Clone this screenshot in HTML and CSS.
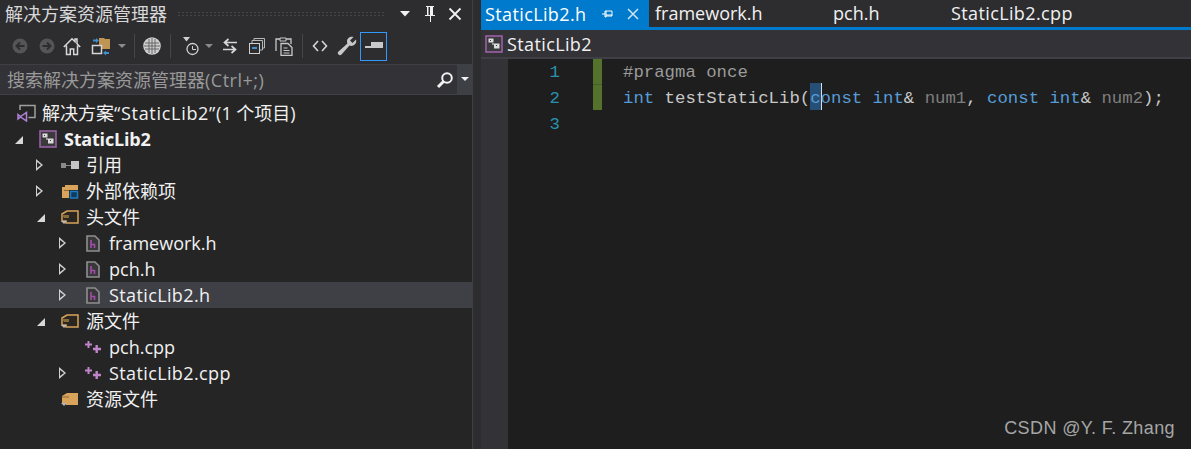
FILE: index.html
```html
<!DOCTYPE html>
<html lang="zh">
<head>
<meta charset="utf-8">
<title>StaticLib2</title>
<link rel="stylesheet" href="styles.css">
</head>
<body>
<div class="app">
  <aside class="explorer">
    <header class="titlebar">
      <span class="title">解决方案资源管理器</span>
      <span class="grip"></span>
      <span class="title-actions">
        <svg class="ti" width="14" height="14" viewBox="0 0 14 14"><path d="M2 4h10L7 9.500z" fill="#f1f1f1"/></svg>
        <svg class="ti" width="14" height="18" viewBox="0 0 14 18"><path d="M3 1h8v1h-1v8h2v1H8v6H7v-6H2v-1h2V2H3zM5.500 2v8H7V2z" fill="#f1f1f1"/></svg>
        <svg class="ti" width="14" height="14" viewBox="0 0 14 14"><path d="M1.500 1.500l11 11M12.500 1.500l-11 11" stroke="#f1f1f1" stroke-width="1.800"/></svg>
      </span>
    </header>
    <div class="toolbar">
      <span class="btn"><svg width="16" height="16" viewBox="0 0 16 16"><circle cx="8" cy="8" r="7.500" fill="#555"/><path d="M12.500 8H5M8 4.500L4.500 8 8 11.500" stroke="#2d2d30" stroke-width="2" fill="none"/></svg></span>
      <span class="btn"><svg width="16" height="16" viewBox="0 0 16 16"><circle cx="8" cy="8" r="7.500" fill="#555"/><path d="M3.500 8H11M8 4.500L11.500 8 8 11.500" stroke="#2d2d30" stroke-width="2" fill="none"/></svg></span>
      <span class="btn"><svg class="home" width="18" height="19" viewBox="0 0 18 19"><path d="M.8 10L9 1.800l3 3V2h2v4.800L17.200 10M3.500 8.500V17.500h3.800v-5.500h3.400v5.500h3.800V8.500" stroke="#d8d8d8" stroke-width="1.500" fill="none"/></svg></span>
      <span class="btn"><svg width="20" height="19" viewBox="0 0 20 19"><path d="M8 1h5l1 1h5v10H8z" fill="#c09553"/><rect x="1.500" y="8.500" width="9" height="8" fill="#2d2d30" stroke="#d6d6d6" stroke-width="1.500"/><path d="M2 3.500h4M13 16h5" stroke="#3f8ed0" stroke-width="2"/><path d="M5 1l3 2.500L5 6zM15 13.500l-3 2.500 3 2.500z" fill="#3f8ed0"/></svg></span>
      <span class="drop"></span>
      <span class="sep s1"></span>
      <span class="btn"><svg width="18" height="18" viewBox="0 0 18 18"><circle cx="9" cy="9" r="8.800" fill="#cfcfcf"/><path d="M6 2v14M9 1v16M12 2v14M2 6h14M1 9h16M2 12h14" stroke="#666" stroke-width="1"/></svg></span>
      <span class="sep s3"></span>
      <span class="btn"><svg width="18" height="20" viewBox="0 0 18 20"><path d="M1 1h7L4.500 5.500z" fill="#d0d0d0"/><circle cx="10.500" cy="13" r="5.500" fill="none" stroke="#d0d0d0" stroke-width="1.300"/><path d="M10.500 10v3.500H14" stroke="#d0d0d0" fill="none"/></svg></span>
      <span class="drop d2"></span>
      <span class="btn b-arrows"><svg width="16" height="16" viewBox="0 0 16 16"><path d="M15 4.500H3M6.500 1L2.500 4.500l4 3.500M1 11.500h12M9.500 8l4 3.500-4 3.500" stroke="#d6d6d6" stroke-width="1.700" fill="none"/></svg></span>
      <span class="btn"><svg width="16" height="16" viewBox="0 0 16 16"><path d="M5 3V.5h10.500V10H13" stroke="#b8b8b8" fill="none"/><path d="M3 5.500V2.500h10.500V12H11" stroke="#b8b8b8" fill="none"/><rect x=".5" y="5.500" width="10" height="10" fill="#2d2d30" stroke="#d0d0d0"/><path d="M3 10h5" stroke="#4a90c8" stroke-width="2"/></svg></span>
      <span class="btn"><svg width="18" height="19" viewBox="0 0 18 19"><path d="M1 14V2h4M11 2h5v5" stroke="#c8c8c8" stroke-width="1.300" fill="none"/><path d="M5 1h6v3H5z" fill="#2d2d30" stroke="#c8c8c8"/><path d="M6 6.500h7l4 4v8H6z" fill="#2d2d30" stroke="#c8c8c8" stroke-width="1.300"/><path d="M8.500 11h4M8.500 13.500h6M8.500 16h6" stroke="#c8c8c8"/></svg></span>
      <span class="sep s2"></span>
      <span class="btn"><svg width="16" height="14" viewBox="0 0 16 14"><path d="M6 2L1.500 7 6 12M10 2l4.500 5L10 12" stroke="#d6d6d6" stroke-width="1.600" fill="none"/></svg></span>
      <span class="btn"><svg width="20" height="20" viewBox="0 0 20 20"><path d="M19 3.500L15.500 7 13 4.500 16.500 1C13.500 0 10 2 10 5.500c0 .8.200 1.500.4 2L1.500 15.500c-1 1-1 2 0 3s2 1 3 0l8-8.900c3.500 1.500 7.800-1.600 6.500-6.100z" fill="#c8c8c8"/></svg></span>
      <span class="tb-active"><svg width="18" height="8" viewBox="0 0 18 8"><path d="M6 0h12v6H0V4h6z" fill="#c8c8c8"/></svg></span>
    </div>
    <div class="search">
      <span class="search-text">搜索解决方案资源管理器<span class="wide5">(Ctrl+;)</span></span>
      <svg class="search-icon" width="18" height="18" viewBox="0 0 18 18"><circle cx="11" cy="7" r="4.800" fill="none" stroke="#f1f1f1" stroke-width="2"/><path d="M7.500 10.500L2 16" stroke="#f1f1f1" stroke-width="3"/></svg>
      <span class="search-drop"></span>
    </div>
    <ul class="tree">
      <li class="row sol">
        <span class="ic"><svg width="19" height="18" viewBox="0 0 19 18"><path d="M3 6V1.500h15v12h-6.500" fill="none" stroke="#a0a0a0" stroke-width="1.500"/><path d="M9.500 8.500v8.500L3.500 13 1 15V10.500L3.500 12.500z" fill="none" stroke="#b180d7" stroke-width="1.500"/></svg></span>
        <span class="tx cjk">解决方案<span class="wider">“StaticLib2”</span>(1 个项目)</span>
      </li>
      <li class="row l0">
        <span class="tw open"></span>
        <span class="ic"><svg width="18" height="18" viewBox="0 0 18 18"><use href="#proj"/></svg></span>
        <span class="tx bold">StaticLib2</span>
      </li>
      <li class="row l1">
        <span class="tw"></span>
        <span class="ic"><svg width="18" height="8" viewBox="0 0 18 8"><rect x="0" y="2" width="5" height="5" fill="#8a8a8a"/><rect x="5" y="4" width="5" height="1" fill="#8a8a8a"/><rect x="10" y="0" width="8" height="8" fill="#c4c4c4"/></svg></span>
        <span class="tx cjk">引用</span>
      </li>
      <li class="row l1">
        <span class="tw"></span>
        <span class="ic"><svg width="18" height="16" viewBox="0 0 18 16"><path d="M1 4h3V2h13v13H1z" fill="#d9a35b"/><path d="M3 7h14v1H3z" fill="#8a6a3a"/><rect x="8" y="7" width="10" height="9" fill="#252526"/><rect x="9.500" y="8.500" width="7" height="6.500" fill="#123a5a" stroke="#1b7cc4" stroke-width="1.500"/></svg></span>
        <span class="tx cjk">外部依赖项</span>
      </li>
      <li class="row l1">
        <span class="tw open"></span>
        <span class="ic"><svg width="18" height="16" viewBox="0 0 18 16"><use href="#folder"/></svg></span>
        <span class="tx cjk">头文件</span>
      </li>
      <li class="row l2">
        <span class="tw"></span>
        <span class="ic"><svg width="14" height="17" viewBox="0 0 14 17"><use href="#hfile"/></svg></span>
        <span class="tx">framework.h</span>
      </li>
      <li class="row l2">
        <span class="tw"></span>
        <span class="ic"><svg width="14" height="17" viewBox="0 0 14 17"><use href="#hfile"/></svg></span>
        <span class="tx">pch.h</span>
      </li>
      <li class="row l2 selected">
        <span class="tw"></span>
        <span class="ic"><svg width="14" height="17" viewBox="0 0 14 17"><use href="#hfile"/></svg></span>
        <span class="tx wide">StaticLib2.h</span>
      </li>
      <li class="row l1">
        <span class="tw open"></span>
        <span class="ic"><svg width="18" height="16" viewBox="0 0 18 16"><use href="#folder"/></svg></span>
        <span class="tx cjk">源文件</span>
      </li>
      <li class="row l2">
        <span class="tw none"></span>
        <span class="ic"><svg width="16" height="12" viewBox="0 0 16 12"><use href="#cpp"/></svg></span>
        <span class="tx">pch.cpp</span>
      </li>
      <li class="row l2">
        <span class="tw"></span>
        <span class="ic"><svg width="16" height="12" viewBox="0 0 16 12"><use href="#cpp"/></svg></span>
        <span class="tx wide">StaticLib2.cpp</span>
      </li>
      <li class="row l1">
        <span class="tw none"></span>
        <span class="ic"><svg width="18" height="16" viewBox="0 0 18 16"><path d="M1 5l5-3h11v12H5v-2H1z" fill="#d9a35b"/><path d="M1 6h7" stroke="#8a6a3a"/><path d="M0 12h6l-3 3z" fill="#b8b8b8"/></svg></span>
        <span class="tx cjk">资源文件</span>
      </li>
    </ul>
  </aside>
  <main class="editor">
    <nav class="tabs">
      <div class="tab active">
        <span class="tab-name wide">StaticLib2.h</span>
        <svg class="tab-pin" width="12" height="10" viewBox="0 0 12 10"><path d="M0 5h3M3 2h1v6H3zM4 2h6v5H4M4 6h6" stroke="#fff" fill="none"/></svg>
        <svg class="tab-close" width="12" height="12" viewBox="0 0 12 12"><path d="M1 1l10 10M11 1L1 11" stroke="#d0e4f3" stroke-width="1.500"/></svg>
      </div>
      <div class="tab t-fw">framework.h</div>
      <div class="tab t-pch">pch.h</div>
      <div class="tab t-cpp wide">StaticLib2.cpp</div>
    </nav>
    <div class="navbar">
      <svg width="18" height="18" viewBox="0 0 18 18"><use href="#proj"/></svg>
      <span class="wide">StaticLib2</span>
    </div>
    <div class="code">
      <div class="margin"></div>
      <div class="numbers"><div>1</div><div>2</div><div>3</div></div>
      <div class="changes"><div class="chg"></div><div class="chg"></div></div>
      <div class="lines">
        <div class="ln pp">#pragma once</div>
        <div class="ln"><span class="kw">int</span> testStaticLib(<span class="sel kw">c</span><span class="kw">onst</span> <span class="kw">int</span>&amp; <span class="prm">num1</span>, <span class="kw">const</span> <span class="kw">int</span>&amp; <span class="prm">num2</span>);</div>
        <div class="ln"></div>
      </div>
    </div>
  </main>
</div>
<div class="watermark">CSDN @Y. F. Zhang</div>
<svg class="defs" width="0" height="0">
  <defs>
    <g id="proj"><rect x="1" y="1" width="16" height="16" fill="#3a3a3d" stroke="#9b5fa8" stroke-width="1.600"/><path d="M3.500 3.500h5v4h-5zM9 8.500h5.500v5H9z" fill="#dcdcdc"/><path d="M5 5h1v1H5zM11 10h1v1h-1z" fill="#3a3a3d"/><path d="M7 8h2v2H7z" fill="#9a9a9a"/></g>
    <g id="folder"><path d="M1 5l5-3h11v12H5v-2H1z" fill="#2a2620" stroke="#d9a35b" stroke-width="1.500"/><path d="M1 6h7v3H3z" fill="#8a6a3a"/><path d="M0 12h6l-3 3z" fill="#b8b8b8"/></g>
    <g id="hfile"><path d="M1 1h8l4 4v11H1z" fill="#38383a" stroke="#8f8f8f" stroke-width="1.600"/><path d="M5 5v8M5 9.500h3.500v3.500" stroke="#a24ea8" stroke-width="1.600" fill="none"/></g>
    <g id="cpp" fill="#c084c8"><path d="M2.500 0h2v2.500H7v2H4.500V7h-2V4.500H0v-2h2.500z"/><path d="M10.500 4h2.400v2.800H16v2.400h-3.100V12h-2.400V9.200H8V6.800h2.500z"/></g>
  </defs>
</svg>
</body>
</html>
```
FILE: styles.css
```css
* { box-sizing: border-box; }
html, body { margin: 0; padding: 0; }
body {
  width: 1191px;
  height: 449px;
  overflow: hidden;
  background: #2d2d30;
  font-family: "Open Sans", "Noto Sans CJK SC", sans-serif;
  color: #f1f1f1;
  position: relative;
}
.app { display: flex; height: 449px; }
.wide { letter-spacing: 0.38px; }
.wide5 { letter-spacing: 0.5px; }
.wider { letter-spacing: 0.7px; }
.cjk { padding-bottom: 2px; }

.explorer {
  width: 473px;
  display: flex;
  flex-direction: column;
  border-right: 1px solid #3f3f46;
  flex: none;
}
.titlebar {
  height: 28px;
  display: flex;
  align-items: center;
  padding: 0 10px 0 5px;
  flex: none;
}
.title { font-size: 18px; line-height: 28px; color: #d8d8d8; white-space: nowrap; }
.grip {
  flex: 1;
  height: 6px;
  margin: 0 13px 0 10px;
  background-image: radial-gradient(#46464a 1px, transparent 1px);
  background-size: 4px 3px;
}
.title-actions { display: flex; align-items: center; gap: 11px; }
.ti { display: block; }

.toolbar {
  height: 36px;
  display: flex;
  align-items: center;
  padding-left: 6px;
  flex: none;
}
.btn {
  width: 27px;
  height: 29px;
  display: flex;
  align-items: center;
  justify-content: center;
  flex: none;
}
.home { margin-left: -3px; }
.drop {
  width: 16px;
  height: 4px;
  flex: none;
  position: relative;
}
.drop::after {
  content: "";
  position: absolute;
  left: 4px;
  top: 0;
  border-left: 4px solid transparent;
  border-right: 4px solid transparent;
  border-top: 4px solid #8a8a8a;
}
.d2 { margin-left: -3px; }
.b-arrows { margin-left: -1px; }
.sep { width: 1px; height: 24px; background: #46464a; flex: none; }
.s1 { margin: 0 3px 0 4px; }
.s2 { margin: 0 3px 0 5px; }
.s3 { margin: 0 6px 0 5px; }
.tb-active {
  width: 27px;
  height: 29px;
  border: 1px solid #3399ff;
  display: flex;
  align-items: center;
  justify-content: center;
  flex: none;
}

.search {
  height: 31px;
  display: flex;
  align-items: center;
  background: #333337;
  border-top: 1px solid #3f3f46;
  border-bottom: 1px solid #3f3f46;
  flex: none;
  position: relative;
  padding-left: 7px;
}
.search-text { font-size: 18px; color: #999; flex: 1; white-space: nowrap; padding-bottom: 2px; }
.search-icon { margin-right: 3px; flex: none; }
.search-drop {
  width: 15px;
  height: 100%;
  background: #3f3f46;
  position: relative;
  flex: none;
}
.search-drop::after {
  content: "";
  position: absolute;
  left: 4px; top: 12px;
  border-left: 4px solid transparent;
  border-right: 4px solid transparent;
  border-top: 4px solid #f1f1f1;
}

.tree {
  list-style: none;
  margin: 0;
  padding: 5px 0 0;
  background: #252526;
  flex: 1;
}
.row {
  height: 26px;
  display: flex;
  align-items: center;
  font-size: 18px;
  white-space: nowrap;
}
.sol { padding-left: 13px; }
.l0 { padding-left: 19px; }
.l1 { padding-left: 41px; }
.l2 { padding-left: 64px; }
.selected { background: #3f3f46; }
.tw {
  width: 22px;
  margin-left: -6px;
  height: 100%;
  flex: none;
  position: relative;
}
.tw::before {
  content: "";
  position: absolute;
  left: 1px; top: 7px;
  width: 0; height: 0;
  border-left: 7px solid #d0d0d0;
  border-top: 6px solid transparent;
  border-bottom: 6px solid transparent;
}
.tw::after {
  content: "";
  position: absolute;
  left: 2px; top: 10px;
  width: 0; height: 0;
  border-left: 4px solid #252526;
  border-top: 3px solid transparent;
  border-bottom: 3px solid transparent;
}
.selected .tw::after { border-left-color: #3f3f46; }
.tw.open::before {
  left: 2px; top: 10px;
  border-left: 8px solid transparent;
  border-top: 0;
  border-bottom: 8px solid #d8d8d8;
}
.tw.open::after { display: none; }
.tw.none::before, .tw.none::after { display: none; }
.ic {
  width: 26px;
  flex: none;
  display: flex;
  align-items: center;
  justify-content: center;
}
.tx { padding-left: 3px; }
.bold { font-weight: 700; letter-spacing: -0.2px; }

.editor {
  flex: 1;
  margin-left: 8px;
  display: flex;
  flex-direction: column;
  min-width: 0;
}
.tabs {
  height: 30px;
  display: flex;
  border-bottom: 3px solid #007acc;
  flex: none;
  font-size: 18px;
}
.tab { height: 27px; line-height: 26px; white-space: nowrap; }
.tab.active {
  width: 168px;
  background: #007acc;
  padding-left: 4px;
  display: flex;
  align-items: center;
  color: #fff;
}
.tab-name { width: 117px; flex: none; }
.tab-pin { margin-right: 13px; }
.t-fw { padding-left: 6px; width: 184px; }
.t-pch { width: 118px; }
.navbar {
  height: 29px;
  background: #333337;
  border-bottom: 2px solid #3f3f46;
  display: flex;
  align-items: center;
  font-size: 18px;
  padding-left: 4px;
  gap: 4px;
  flex: none;
}
.code {
  flex: 1;
  display: flex;
  background: #1e1e1e;
  font-family: "Liberation Mono", monospace;
  font-size: 17.33px;
}
.margin { width: 27px; background: #333337; flex: none; }
.numbers {
  width: 52px;
  flex: none;
  color: #2b91af;
  text-align: right;
  line-height: 26px;
  padding-top: 1px;
}
.changes { width: 9px; margin-left: 33px; flex: none; }
.chg { height: 25px; background: #54722c; }
.chg:first-child { height: 26px; border-bottom: 1px solid #44602a; }
.lines { margin-left: 21px; padding-top: 1px; line-height: 26px; color: #c8c8c8; }
.ln { height: 26px; white-space: pre; }
.pp { color: #9b9b9b; }
.kw { color: #569cd6; }
.prm { color: #7f7f7f; }
.sel {
  background: #264f78;
  display: inline-block;
  height: 24px;
  box-shadow: 0 -3px 0 #264f78, 1px 0 0 #dcdcdc, 1px -3px 0 #dcdcdc;
}
.watermark {
  position: absolute;
  right: 16px;
  bottom: 10px;
  font-family: "Liberation Sans", sans-serif;
  font-size: 18px;
  letter-spacing: 0.4px;
  color: #a6a6a6;
}
.defs { position: absolute; }
```
